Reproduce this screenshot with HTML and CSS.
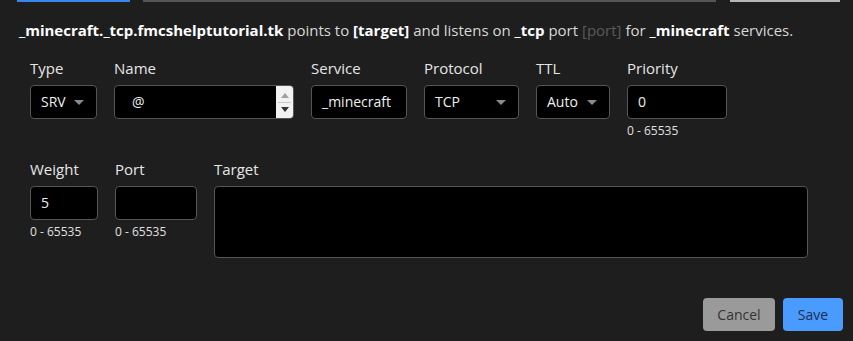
FILE: index.html
```html
<!DOCTYPE html>
<html lang="en">
<head>
    <meta charset="UTF-8">
    <title>SRV record</title>
    <link rel="stylesheet" href="styles.css">
</head>
<body>
    <!-- edges of the buttons above, cut off by the frame -->
    <div class="top-edges">
        <span class="edge edge-blue"></span>
        <span class="edge edge-gray"></span>
        <span class="edge edge-light"></span>
    </div>

    <p class="summary">
        <b>_minecraft._tcp.fmcshelptutorial.tk</b> points to <b>[target]</b> and listens on <b>_tcp</b> port <span class="muted">[port]</span> for <b>_minecraft</b> services.
    </p>

    <div class="form-row">
        <div class="field w-type">
            <label class="label">Type</label>
            <div class="control select">SRV<span class="caret"></span></div>
        </div>
        <div class="field w-name">
            <label class="label">Name</label>
            <div class="control name-box">
                <span class="name-value">@</span>
                <span class="spinner">
                    <span class="spin-up"></span>
                    <span class="spin-line"></span>
                    <span class="spin-down"></span>
                </span>
            </div>
        </div>
        <div class="field w-service">
            <label class="label">Service</label>
            <div class="control">_minecraft</div>
        </div>
        <div class="field w-protocol">
            <label class="label">Protocol</label>
            <div class="control select">TCP<span class="caret"></span></div>
        </div>
        <div class="field w-ttl">
            <label class="label">TTL</label>
            <div class="control select">Auto<span class="caret"></span></div>
        </div>
        <div class="field w-priority">
            <label class="label">Priority</label>
            <div class="control">0</div>
            <div class="hint">0 - 65535</div>
        </div>
    </div>

    <div class="form-row second">
        <div class="field w-weight">
            <label class="label">Weight</label>
            <div class="control">5</div>
            <div class="hint">0 - 65535</div>
        </div>
        <div class="field w-port">
            <label class="label">Port</label>
            <div class="control"></div>
            <div class="hint">0 - 65535</div>
        </div>
        <div class="field w-target">
            <label class="label">Target</label>
            <div class="control target-box"></div>
        </div>
    </div>

    <div class="actions">
        <button class="btn btn-cancel">Cancel</button>
        <button class="btn btn-save">Save</button>
    </div>
</body>
</html>
```

FILE: styles.css
```css
body {
    margin: 0;
    background-color: #1e1e1e;
    color: #e6e6e6;
    font-family: "Open Sans", "Noto Sans", sans-serif;
    height: 341px;
    overflow: hidden;
}

.top-edges {
    display: flex;
    height: 2px;
}

.edge {
    height: 2px;
}

.edge-blue {
    margin-left: 17px;
    width: 113px;
    background-color: #3a86f0;
}

.edge-gray {
    margin-left: 13px;
    width: 573px;
    background-color: #555;
}

.edge-light {
    margin-left: 14px;
    width: 110px;
    background-color: #b5b5b5;
}

.summary {
    margin: 17px 0 0 19px;
    font-size: 15px;
    line-height: 22px;
    color: #d8d8d8;
}

.summary b {
    color: #fff;
}

.muted {
    color: #5a5a5a;
}

.form-row {
    display: flex;
    gap: 17px;
    padding-left: 30px;
    margin-top: 17px;
}

.form-row.second {
    margin-top: 20px;
}

.field {
    display: flex;
    flex-direction: column;
}

.label {
    font-size: 15px;
    line-height: 20px;
    margin-bottom: 7px;
    color: #e6e6e6;
}

.control {
    position: relative;
    box-sizing: border-box;
    height: 34px;
    background-color: #000;
    border: 1px solid #555;
    border-radius: 4px;
    padding: 0 10px;
    font-size: 14px;
    line-height: 32px;
    color: #eee;
}

.select .caret {
    position: absolute;
    right: 12px;
    top: 14px;
    border-left: 5px solid transparent;
    border-right: 5px solid transparent;
    border-top: 5px solid #8a8a8a;
}

.name-box {
    padding-left: 17px;
    overflow: hidden;
}

.spinner {
    position: absolute;
    right: 0;
    top: 0;
    bottom: 0;
    width: 17px;
    background-color: #f2f2f2;
    display: flex;
    flex-direction: column;
    align-items: center;
    justify-content: center;
}

.spin-up {
    border-left: 4px solid transparent;
    border-right: 4px solid transparent;
    border-bottom: 5px solid #a0a0a0;
}

.spin-line {
    width: 13px;
    height: 1px;
    background-color: #c8c8c8;
    margin: 4px 0;
}

.spin-down {
    border-left: 4px solid transparent;
    border-right: 4px solid transparent;
    border-top: 5px solid #333;
}

.hint {
    font-size: 12px;
    line-height: 16px;
    margin-top: 4px;
    color: #e0e0e0;
}

.w-type { width: 67px; }
.w-name { width: 180px; }
.w-service { width: 96px; }
.w-protocol { width: 95px; }
.w-ttl { width: 74px; }
.w-priority { width: 100px; }
.w-weight { width: 68px; }
.w-port { width: 82px; }
.w-target { width: 594px; }

.target-box {
    height: 72px;
}

.actions {
    display: flex;
    justify-content: flex-end;
    gap: 8px;
    padding-right: 10px;
    margin-top: 40px;
}

.btn {
    height: 33px;
    border: none;
    border-radius: 4px;
    font-family: "Open Sans", "Noto Sans", sans-serif;
    font-size: 14px;
    padding: 0;
}

.btn-cancel {
    width: 72px;
    background-color: #9a9a9a;
    color: #333;
}

.btn-save {
    width: 60px;
    background-color: #4a9bff;
    color: #1f2d4d;
}
```
